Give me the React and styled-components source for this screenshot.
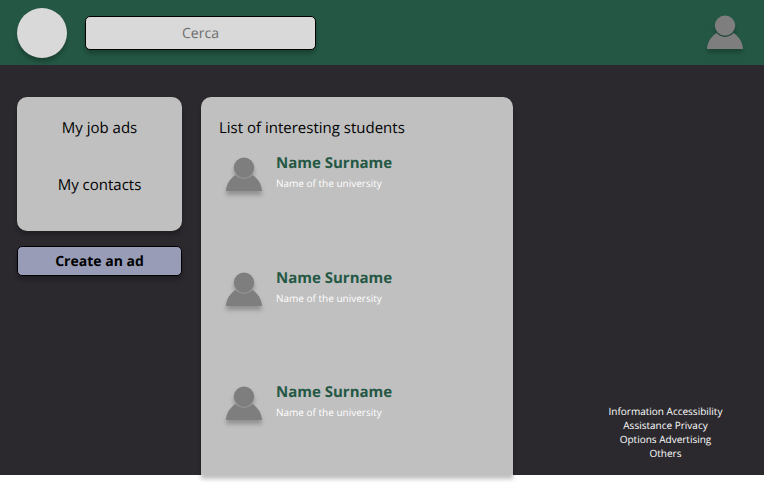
import React from "react";
import styled, { createGlobalStyle } from "styled-components";

const GlobalStyle = createGlobalStyle`
  * { box-sizing: border-box; }
  body {
    margin: 0;
    background: #fff;
    overflow: hidden;
    font-family: "Open Sans", sans-serif;
    text-rendering: geometricPrecision;
  }
  #root { height: 483px; }
`;

const Page = styled.div`
  height: 475px;
  display: flex;
  flex-direction: column;
  background: #2b292e;
`;

const Header = styled.header`
  height: 65px;
  flex: none;
  display: flex;
  align-items: center;
  padding: 0 21px 0 17px;
  background: #245845;
`;

const Logo = styled.div`
  width: 50px;
  height: 50px;
  margin: 1px 18px 0 0;
  border-radius: 50%;
  background: #d9d9d9;
  box-shadow: 0 4px 4px rgba(0, 0, 0, 0.25);
`;

const Search = styled.input`
  width: 231px;
  height: 34px;
  padding: 1px 0 0;
  border: 1px solid #000;
  border-radius: 5px;
  background: #d9d9d9;
  box-shadow: 0 4px 4px rgba(0, 0, 0, 0.25);
  font: 400 14px "Open Sans", sans-serif;
  text-rendering: inherit;
  text-align: center;
  outline: none;
  &::placeholder { color: #6d6d6d; opacity: 1; }
`;

const Profile = styled.div`
  margin: -1px 0 0 auto;
  height: 34px;
`;

const PersonIcon = styled.svg`
  display: block;
  flex: none;
  width: 36px;
  height: 34px;
  overflow: visible;
  fill: #7e7e7e;
  filter: drop-shadow(0 4px 2px rgba(0, 0, 0, 0.25));
`;

const Main = styled.main`
  flex: 1;
  display: flex;
  align-items: stretch;
  padding: 32px 41px 0 17px;
`;

const Sidebar = styled.aside`
  width: 165px;
  margin-right: 19px;
  display: flex;
  flex-direction: column;
  gap: 15px;
`;

const Menu = styled.nav`
  height: 134px;
  padding-top: 20px;
  display: flex;
  flex-direction: column;
  align-items: center;
  gap: 35px;
  border-radius: 10px;
  background: #c0c0c0;
  box-shadow: 0 4px 4px rgba(0, 0, 0, 0.25);
`;

const MenuItem = styled.a`
  font-size: 15px;
  line-height: 22px;
  color: #000;
`;

const CreateButton = styled.button`
  height: 30px;
  padding: 0;
  border: 1px solid #000;
  border-radius: 5px;
  background: #989cb7;
  box-shadow: 0 4px 4px rgba(0, 0, 0, 0.25);
  font: 700 14px "Open Sans", sans-serif;
  text-rendering: inherit;
  color: #000;
`;

const Panel = styled.section`
  width: 312px;
  padding: 20px 18px 0;
  border-radius: 10px 10px 0 0;
  background: #c0c0c0;
  box-shadow: 0 4px 4px rgba(0, 0, 0, 0.25);
`;

const PanelTitle = styled.h1`
  margin: 0 0 14px;
  font-size: 15px;
  font-weight: 400;
  line-height: 22px;
  color: #000;
`;

const StudentList = styled.div`
  display: grid;
  grid-auto-rows: 114.6px;
  height: 322px;
`;

const Student = styled.article`
  display: flex;
  align-items: flex-start;
  gap: 14px;
  padding: 4px 0 0 7px;
`;

const StudentName = styled.h2`
  margin: -5px 0 0;
  font-size: 15px;
  font-weight: 700;
  line-height: 22px;
  color: #245845;
`;

const University = styled.p`
  margin: 2px 0 0;
  font-size: 10px;
  line-height: 14px;
  color: #fff;
`;

const Footer = styled.footer`
  width: 115px;
  margin: auto 0 15px auto;
  font-size: 10px;
  line-height: 14px;
  text-align: center;
  color: #fff;
`;

const FooterLine = styled.div`
  white-space: nowrap;
`;

function Person() {
  return (
    <PersonIcon viewBox="0 0 36 34" aria-hidden="true">
      <circle cx="18" cy="10.6" r="10.2" />
      <path d="M9.6 18.1C4.2 21.4 0.4 27 0 34H36C35.6 27 31.8 21.4 26.4 18.1A11.2 11.2 0 0 1 9.6 18.1Z" />
    </PersonIcon>
  );
}

const students = [1, 2, 3].map((id) => ({
  id,
  name: "Name Surname",
  university: "Name of the university",
}));

const footerLines = [
  "Information Accessibility",
  "Assistance Privacy",
  "Options Advertising",
  "Others",
];

export default function App() {
  return (
    <>
      <GlobalStyle />
      <Page>
        <Header>
          <Logo />
          <Search placeholder="Cerca" />
          <Profile><Person /></Profile>
        </Header>
        <Main>
          <Sidebar>
            <Menu>
              <MenuItem>My job ads</MenuItem>
              <MenuItem>My contacts</MenuItem>
            </Menu>
            <CreateButton>Create an ad</CreateButton>
          </Sidebar>
          <Panel>
            <PanelTitle>List of interesting students</PanelTitle>
            <StudentList>
              {students.map((s) => (
                <Student key={s.id}>
                  <Person />
                  <div>
                    <StudentName>{s.name}</StudentName>
                    <University>{s.university}</University>
                  </div>
                </Student>
              ))}
            </StudentList>
          </Panel>
          <Footer>
            {footerLines.map((line) => (
              <FooterLine key={line}>{line}</FooterLine>
            ))}
          </Footer>
        </Main>
      </Page>
    </>
  );
}
